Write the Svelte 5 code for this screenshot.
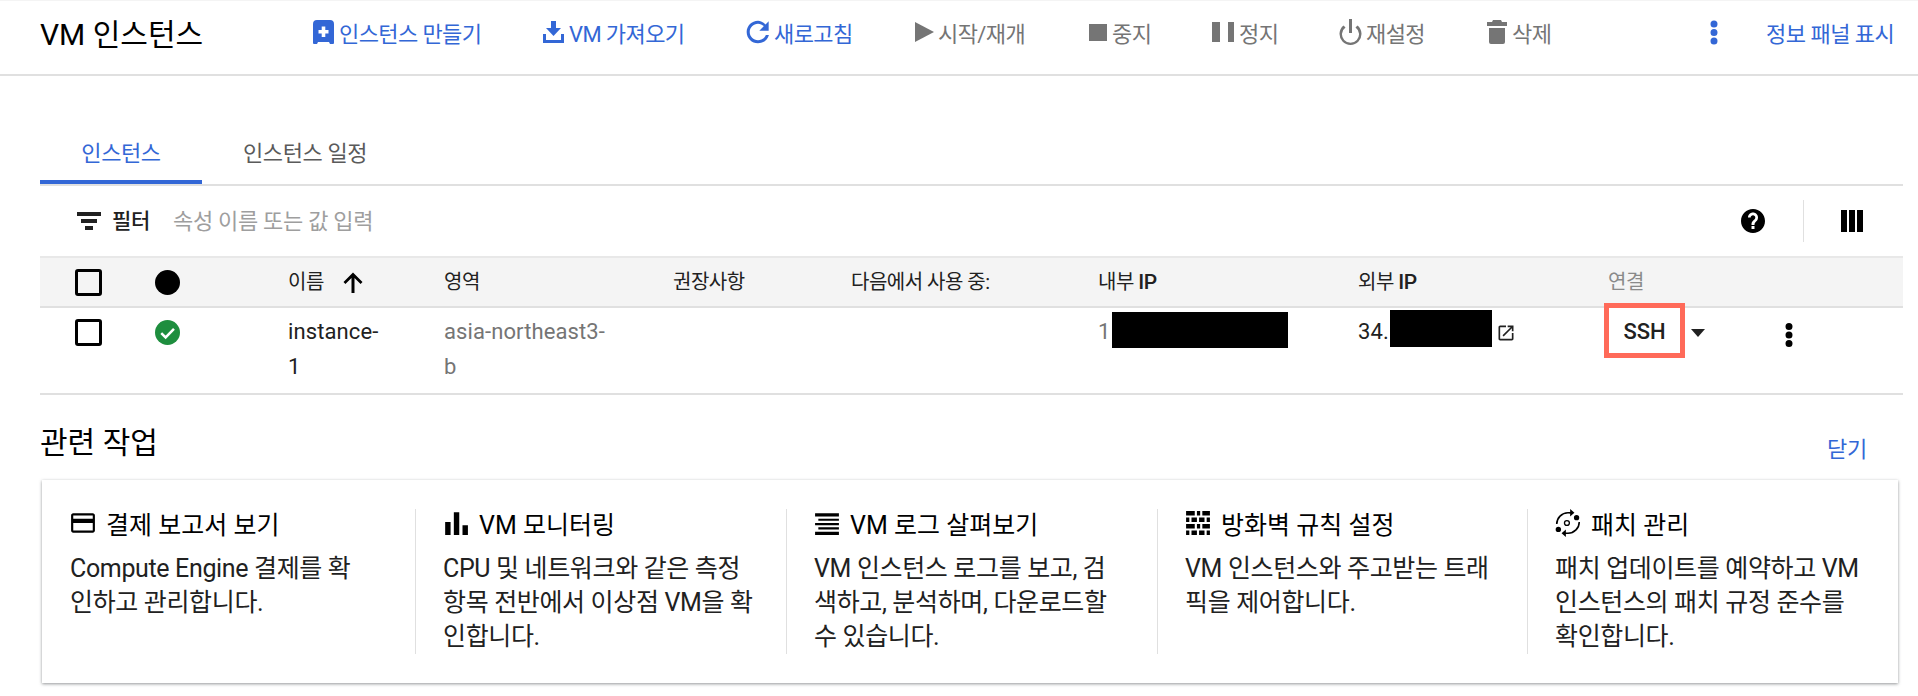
<script>
  const actions = [
    { label: '인스턴스 만들기', w: 230, on: true, icon: 'create', vb: '0 0 21 24', iw: 21, ih: 24, gap: 5 },
    { label: 'VM 가져오기', w: 203, on: true, icon: 'import', vb: '0 0 21 22', iw: 21, ih: 22, gap: 5 },
    { label: '새로고침', w: 169, on: true, icon: 'refresh', vb: '3 3 18 18', iw: 24, ih: 24, gap: 4 },
    { label: '시작/재개', w: 174, icon: 'play', vb: '0 0 20 20', iw: 20, ih: 20, gap: 3 },
    { label: '중지', w: 123, icon: 'stop', vb: '0 0 18 17', iw: 18, ih: 17, gap: 5 },
    { label: '정지', w: 126, icon: 'pause', vb: '0 0 22 20', iw: 22, ih: 20, gap: 5 },
    { label: '재설정', w: 149, icon: 'power', vb: '0 0 25 26', iw: 25, ih: 26, gap: 3 },
    { label: '삭제', w: 227, icon: 'trash', vb: '0 0 20 24', iw: 20, ih: 24, gap: 5 }
  ];
  const paths = {
    create: 'M4 0h13a4 4 0 0 1 4 4v19a1 1 0 0 1-1 1h-3l-1-2H5l-1 2H1a1 1 0 0 1-1-1V4a4 4 0 0 1 4-4zM8.700 6.500V10H5.500v3.500h3.200V17h3.600v-3.500h3.200V10h-3.200V6.500z',
    import: 'M8 0h5v7h5l-7.500 8L3 7h5zM0 13h3v6h15v-6h3v9H0z',
    refresh: 'M17.650 6.350C16.200 4.900 14.210 3.500 12 3.500c-4.700 0-8.500 3.800-8.500 8.500s3.800 8.500 8.500 8.500c3.950 0 7.250-2.700 8.200-6.300h-2.300c-.82 2.330-3.100 4-5.900 4-3.450 0-6.200-2.800-6.200-6.200s2.750-6.200 6.200-6.200c1.700 0 3.200.7 4.300 1.800L13 11h7V4l-2.350 2.350z',
    play: 'M0 0v20l19-10z',
    stop: 'M0 0h18v17H0z',
    pause: 'M0 0h8v20H0zM16 0h6v20h-6z',
    power: 'M11 0h3v14h-3zM5.500 6.500l2 2a8.500 8.500 0 1 0 10 0l2-2a11 11 0 1 1-14 0z',
    trash: 'M2 8h16v14a2 2 0 0 1-2 2H4a2 2 0 0 1-2-2zM6 0h8l1 2h5v4H0V2h5z'
  };
  const columns = [
    { label: '이름', arrow: true },
    { label: '영역' },
    { label: '권장사항' },
    { label: '다음에서 사용 중:' },
    { label: '내부', ip: true },
    { label: '외부', ip: true },
    { label: '연결', dim: true }
  ];
  const cards = [
    { icon: 'card', title: '결제 보고서 보기', lines: ['Compute Engine 결제를 확', '인하고 관리합니다.'] },
    { icon: 'bars', title: 'VM 모니터링', lines: ['CPU 및 네트워크와 같은 측정', '항목 전반에서 이상점 VM을 확', '인합니다.'] },
    { icon: 'logs', title: 'VM 로그 살펴보기', lines: ['VM 인스턴스 로그를 보고, 검', '색하고, 분석하며, 다운로드할', '수 있습니다.'] },
    { icon: 'wall', title: '방화벽 규칙 설정', lines: ['VM 인스턴스와 주고받는 트래', '픽을 제어합니다.'] },
    { icon: 'patch', title: '패치 관리', lines: ['패치 업데이트를 예약하고 VM', '인스턴스의 패치 규정 준수를', '확인합니다.'] }
  ];
</script>

<div class="page">
  <header class="topbar">
    <h1 class="title">VM 인스턴스</h1>
    {#each actions as a}
      <div class="action" class:on={a.on} style="width:{a.w}px;gap:{a.gap}px">
        <svg viewBox={a.vb} width={a.iw} height={a.ih} class="aicon"><path fill-rule="evenodd" d={paths[a.icon]} /></svg>
        <span>{a.label}</span>
      </div>
    {/each}
    <svg viewBox="0 0 24 24" class="kebab-top"><path d="M12 7.500a3.500 3.500 0 1 0 0-7 3.500 3.500 0 0 0 0 7zm0 1.500a3.500 3.500 0 1 0 0 7 3.500 3.500 0 0 0 0-7zm0 8.500a3.500 3.500 0 1 0 0 7 3.500 3.500 0 0 0 0-7z" /></svg>
    <div class="info">정보 패널 표시</div>
  </header>

  <main class="content">
    <nav class="tabs">
      <div class="tab active">인스턴스</div>
      <div class="tab">인스턴스 일정</div>
    </nav>

    <div class="filter">
      <svg viewBox="0 0 24 24" class="ficon"><path d="M8 21h8v-4H8zM0 3v4h24V3zm4 11h16v-4H4z" /></svg>
      <span class="flabel">필터</span>
      <span class="fplace">속성 이름 또는 값 입력</span>
      <svg viewBox="0 0 24 24" class="help"><path d="M12 0C5.400 0 0 5.400 0 12s5.400 12 12 12 12-5.400 12-12S18.600 0 12 0zm1.500 20h-3v-3h3zm2.600-8.400l-1 1c-1 .9-1.600 1.800-1.600 3.400h-3v-.6c0-1.400.6-2.700 1.500-3.600l1.600-1.600c.4-.4.700-1 .7-1.700 0-1.200-1-2.200-2.300-2.200S9.700 7.300 9.700 8.500H7c0-2.800 2.200-5 5-5s5 2.200 5 5c0 1.200-.4 2.300-.9 3.100z" /></svg>
      <span class="fdiv"></span>
      <svg viewBox="0 0 22 22" class="cols"><path d="M0 0h6v22H0zM8 0h6v22H8zM16 0h6v22h-6z" /></svg>
    </div>

    <div class="thead">
      <span class="box"></span>
      <span class="dot"></span>
      {#each columns as c}
        <span class="th" class:dim={c.dim}>
          <span class="thtext">{c.label}{#if c.ip}&nbsp;<b class="ipb">IP</b>{/if}</span>
          {#if c.arrow}
            <svg viewBox="0 0 24 24" class="arrow"><path d="M2.500 12l1.900 1.900 6.100-6V23h3V7.900l6.100 6.100 1.900-2-9.500-9.500z" /></svg>
          {/if}
        </span>
      {/each}
    </div>

    <div class="trow">
      <span class="box"></span>
      <svg viewBox="0 0 24 24" class="okay"><circle cx="12" cy="12" r="12" fill="#1e8e3e" /><path d="M6 12.500l4.200 4.200L18.200 8.500" fill="none" stroke="#fff" stroke-width="2.400" /></svg>
      <div class="cell dark">instance-<br />1</div>
      <div class="cell muted">asia-northeast3-<br />b</div>
      <div></div>
      <div></div>
      <div class="cell muted ip">1<span class="mask m1"></span></div>
      <div class="cell dark ip">34.<span class="mask m2"></span>
        <svg viewBox="0 0 24 24" class="ext"><path d="M19 21H5c-1.100 0-2-.9-2-2V5c0-1.100.9-2 2-2h7v2H5v14h14v-7h2v7c0 1.100-.9 2-2 2zM14 3v2h3.600l-9.800 9.800 1.400 1.400L19 6.400V10h2V3z" /></svg>
      </div>
      <div class="connect">
        <span class="ssh">SSH</span>
        <span class="caret"></span>
        <svg viewBox="0 0 24 24" class="kebab"><path d="M12 7a3.500 3.500 0 1 0 0-7 3.500 3.500 0 0 0 0 7zm0 1.500a3.500 3.500 0 1 0 0 7 3.500 3.500 0 0 0 0-7zm0 8.500a3.500 3.500 0 1 0 0 7 3.500 3.500 0 0 0 0-7z" /></svg>
      </div>
    </div>

    <div class="rel-head">
      <h2>관련 작업</h2>
      <span class="close">닫기</span>
    </div>

    <section class="panel">
      {#each cards as c, i}
        <article class="pcard" class:first={i === 0}>
          <div class="ctitle">
            {#if c.icon === 'card'}
              <svg viewBox="0 0 24 24" class="cicon"><path d="M21 3H3C1.800 3 1 3.900 1 5v14c0 1.100.8 2 2 2h18c1.100 0 2-.9 2-2V5c0-1.100-.9-2-2-2zm0 16H3v-7h18zm0-11H3V5h18z" /></svg>
            {:else if c.icon === 'bars'}
              <svg viewBox="0 0 24 24" class="cicon"><path d="M2 11h5v12H2zM10 2h5v21h-5zM18 14h5v9h-5z" /></svg>
            {:else if c.icon === 'logs'}
              <svg viewBox="0 0 24 24" class="cicon"><path d="M1 3h22v3H1zM4 8h19v2H4zM1 12h22v2H1zM4 16h19v2H4zM1 20h22v3H1z" /></svg>
            {:else if c.icon === 'wall'}
              <svg viewBox="0 0 24 24" class="cicon"><path d="M1 1h8v4H1zM11 1h3v4h-3zM16 1h7v4h-7zM1 7h3v4H1zM6 7h5v4H6zM13 7h5v4h-5zM20 7h3v4h-3zM1 13h8v4H1zM11 13h3v4h-3zM16 13h7v4h-7zM1 19h3v4H1zM6 19h5v4H6zM13 19h5v4h-5zM20 19h3v4h-3z" /></svg>
            {:else}
              <svg viewBox="0 0 24 28" class="cicon tall">
                <path d="M1.500 15A10.500 10.500 0 0 1 12 4.500h3M22.500 13A10.500 10.500 0 0 1 12 23.500H9" fill="none" stroke="#000" stroke-width="1.500" />
                <path d="M14 1l4 3.500L14 8zM10 20l-4 3.500 4 3.500z" />
                <circle cx="11" cy="14" r="2.300" fill="none" stroke="#000" stroke-width="1.200" />
                <circle cx="20" cy="9" r="2.500" /><circle cx="3" cy="20" r="2.500" />
              </svg>
            {/if}
            <span>{c.title}</span>
          </div>
          <p class="cbody">
            {#each c.lines as l}<span class="ln">{l}</span>{/each}
          </p>
        </article>
      {/each}
    </section>
  </main>
</div>

<style>
  :global(body) {
    margin: 0;
    background: #fff;
  }
  .page {
    width: 1918px;
    height: 696px;
    overflow: hidden;
    font-family: Roboto, "Noto Sans CJK KR", sans-serif;
    color: #000;
    position: relative;
  }
  .topbar {
    border-top: 1px solid #f4f4f4;
    border-bottom: 2px solid #e0e0e0;
    display: flex;
    align-items: center;
    padding-left: 40px;
    height: 73px;
  }
  .title {
    width: 273px;
    margin: 0;
    font-size: 30px;
    font-weight: 400;
    line-height: 36px;
    position: relative;
    top: -3px;
  }
  .action {
    display: flex;
    align-items: center;
    color: #757575;
    fill: #757575;
    font-size: 22px;
    letter-spacing: -0.6px;
    margin-top: -11px;
    white-space: nowrap;
  }
  .action.on {
    color: #3367d6;
    fill: #3367d6;
  }
  .aicon {
    flex: none;
  }
  .kebab-top {
    width: 24px;
    height: 28px;
    fill: #3367d6;
    margin: -11px 41px 0 -12px;
  }
  .info {
    color: #3367d6;
    font-size: 22px;
    letter-spacing: -0.5px;
    margin-top: -11px;
    margin-left: -1px;
    white-space: nowrap;
  }
  .content {
    padding: 0 15px 0 40px;
  }
  .tabs {
    margin-top: 33px;
    display: flex;
    height: 75px;
    border-bottom: 2px solid #e0e0e0;
  }
  .tab {
    width: 162px;
    box-sizing: border-box;
    text-align: center;
    font-size: 22px;
    letter-spacing: -0.4px;
    color: #5a5a5a;
    line-height: 89px;
    height: 75px;
    white-space: nowrap;
  }
  .tab + .tab {
    width: 200px;
    padding-left: 41px;
    text-align: left;
  }
  .tab.active {
    color: #3367d6;
    border-bottom: 4px solid #3367d6;
  }
  .filter {
    height: 70px;
    display: flex;
    align-items: center;
    padding-left: 37px;
  }
  .ficon {
    width: 24px;
    height: 24px;
    fill: #212121;
  }
  .flabel {
    margin-left: 11px;
    font-size: 21px;
    letter-spacing: -0.3px;
    font-weight: 500;
    color: #212121;
    position: relative;
    top: -2px;
  }
  .fplace {
    margin-left: 23px;
    font-size: 22px;
    letter-spacing: -0.3px;
    color: #9e9e9e;
    flex: 1;
    position: relative;
    top: -2px;
  }
  .help {
    width: 24px;
    height: 24px;
    fill: #000;
  }
  .fdiv {
    width: 1px;
    height: 42px;
    background: #e0e0e0;
    margin: 0 37px 0 38px;
  }
  .cols {
    width: 22px;
    height: 22px;
    fill: #000;
    margin-right: 40px;
  }
  .thead,
  .trow {
    display: grid;
    grid-template-columns: 80px 133px 156px 229px 178px 247px 260px 252px 293px;
    padding-left: 35px;
  }
  .thead {
    height: 48px;
    align-items: center;
    background: #f4f4f4;
    border-top: 2px solid #e8e8e8;
    border-bottom: 2px solid #e0e0e0;
    font-size: 20px;
    letter-spacing: -0.5px;
    color: #212121;
  }
  .th {
    display: flex;
    align-items: center;
    gap: 17px;
    white-space: nowrap;
    font-weight: 400;
  }
  .thtext {
    position: relative;
    top: -2px;
  }
  .ipb {
    font-weight: 500;
    font-size: 21px;
  }
  .th.dim {
    color: #8a8a8a;
    margin-left: -2px;
  }
  .arrow {
    width: 24px;
    height: 24px;
    fill: #000;
  }
  .box {
    width: 27px;
    height: 27px;
    box-sizing: border-box;
    border: 3px solid #000;
    border-radius: 3px;
  }
  .dot {
    width: 25px;
    height: 25px;
    border-radius: 50%;
    background: #000;
  }
  .trow {
    height: 85px;
    border-bottom: 2px solid #e0e0e0;
    font-size: 22px;
    align-items: start;
  }
  .trow > .box {
    margin-top: 11px;
  }
  .okay {
    width: 25px;
    height: 25px;
    margin-top: 12px;
  }
  .cell {
    line-height: 35px;
    margin-top: 6px;
    white-space: nowrap;
    letter-spacing: 0.1px;
  }
  .dark {
    color: #212121;
  }
  .muted {
    color: #757575;
  }
  .ip {
    display: flex;
    align-items: center;
    height: 35px;
  }
  .mask {
    display: inline-block;
    background: #000;
    position: absolute;
  }
  .m1 {
    left: 1112px;
    top: 312px;
    width: 176px;
    height: 36px;
  }
  .m2 {
    left: 1390px;
    top: 310px;
    width: 102px;
    height: 37px;
  }
  .ext {
    width: 20px;
    height: 20px;
    fill: #212121;
    position: absolute;
    left: 1496px;
    top: 323px;
  }
  .connect {
    display: flex;
    align-items: center;
    height: 55px;
    margin-left: -6px;
    margin-top: -5px;
    position: relative;
    z-index: 1;
  }
  .ssh {
    width: 81px;
    height: 55px;
    box-sizing: border-box;
    border: 5px solid #ff6a59;
    text-align: center;
    line-height: 48px;
    font-size: 22px;
    font-weight: 500;
    color: #212121;
    background: #fff;
  }
  .caret {
    width: 0;
    height: 0;
    border-left: 7px solid transparent;
    border-right: 7px solid transparent;
    border-top: 8px solid #212121;
    margin-left: 6px;
    margin-top: 5px;
  }
  .kebab {
    width: 24px;
    height: 28px;
    fill: #000;
    margin-left: 72px;
    margin-top: 8px;
  }
  .rel-head {
    display: flex;
    justify-content: space-between;
    align-items: center;
    height: 85px;
  }
  .rel-head h2 {
    margin: 0;
    font-size: 30px;
    font-weight: 400;
    line-height: 40px;
    position: relative;
    top: 5px;
  }
  .close {
    color: #3367d6;
    font-size: 22px;
    margin-right: 36px;
    letter-spacing: -0.3px;
    position: relative;
    top: 9px;
  }
  .panel {
    display: grid;
    grid-template-columns: 373px 371px 371px 370px 1fr;
    margin-left: 2px;
    height: 203px;
    padding-top: 29px;
    padding-bottom: 29px;
    box-sizing: border-box;
    box-shadow: 0 1px 3px rgba(60, 64, 67, 0.55);
    margin-right: 5px;
  }
  .pcard {
    border-left: 1px solid #e0e0e0;
    padding-left: 27px;
    height: 145px;
    white-space: nowrap;
  }
  .pcard.first {
    border-left: none;
    padding-left: 28px;
  }
  .ctitle {
    display: flex;
    align-items: center;
    gap: 10px;
    font-size: 25px;
    height: 32px;
    margin-top: -2px;
  }
  .cicon {
    width: 26px;
    height: 26px;
    fill: #000;
    flex: none;
  }
  .cicon.tall {
    height: 30px;
  }
  .cbody {
    margin: 0;
    padding-top: 13px;
    font-size: 25px;
    letter-spacing: -0.35px;
    line-height: 34px;
    color: #212121;
  }
  .ln {
    display: block;
  }
</style>
